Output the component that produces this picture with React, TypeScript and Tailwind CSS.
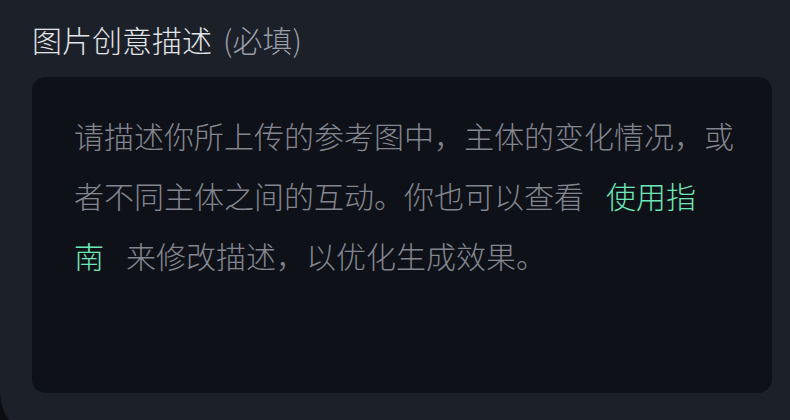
export default function App() {
  return (
    <div className="h-[420px] w-[790px] overflow-hidden bg-[#0b0d12]">
      <div
        className="flex h-[440px] w-[830px] flex-col rounded-bl-[48px] bg-[#1b2029] pl-8 pt-[19px]"
        style={{ fontFamily: '"Noto Sans CJK SC", "Noto Sans", sans-serif' }}
      >
        <div className="text-[30px] font-light leading-[40px] text-[#e2e4e8]">
          图片创意描述<span className="ml-[11px] text-[#9a9ea6]">(必填)</span>
        </div>
        <div className="mt-[18px] h-[316px] w-[740px] rounded-[14px] bg-[#0e1118] pl-[42px] pr-[38px] pt-[28px]">
          <p className="text-[30px] font-light leading-[60px] text-[#83868f]">
            请描述你所上传的参考图中，主体的变化情况，或者不同主体之间的互动。你也可以查看
            <a className="mx-[22px] text-[#6ee7b7]">使用指南</a>
            来修改描述，以优化生成效果。
          </p>
        </div>
      </div>
    </div>
  );
}
